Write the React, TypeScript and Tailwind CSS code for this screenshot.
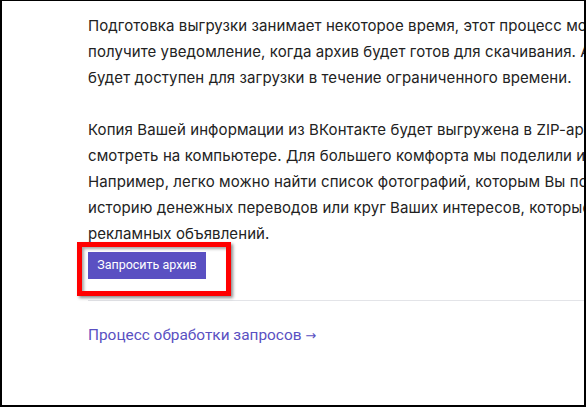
export default function App() {
  return (
    <div className="relative w-[586px] h-[407px] overflow-hidden bg-white border-l-2 border-r-2 border-b-2 border-t border-black">
      <div className="pl-[86px] pt-[12px] w-[900px]" style={{ fontFamily: "Inter, 'Noto Sans', sans-serif" }}>
        <p className="text-[15px] leading-[26px] tracking-[0.09px] text-[#222222] whitespace-nowrap">
          Подготовка выгрузки занимает некоторое время, этот процесс может занять до нескольких дней. Вы
          <br />
          получите уведомление, когда архив будет готов для скачивания. Архив
          <br />
          будет доступен для загрузки в течение ограниченного времени.
        </p>
        <p className="mt-[26px] text-[15px] leading-[26px] tracking-[0.09px] text-[#222222] whitespace-nowrap">
          Копия Вашей информации из ВКонтакте будет выгружена в ZIP-архив, который Вы сможете
          <br />
          смотреть на компьютере. Для большего комфорта мы поделили информацию на разделы.
          <br />
          Например, легко можно найти список фотографий, которым Вы поставили «Мне нравится»,
          <br />
          историю денежных переводов или круг Ваших интересов, которые используются для показа
          <br />
          рекламных объявлений.
        </p>
        <div className="mt-[5px] flex">
          <button
            className="w-[118px] h-[27px] bg-[#5a50c2] text-white text-[12.5px] font-normal flex items-center justify-center"
            style={{ fontFamily: "Roboto, 'Liberation Sans', sans-serif" }}
          >
            Запросить архив
          </button>
        </div>
        <div className="mt-[21px] h-px bg-[#e3e4e8] w-[600px]" />
        <div
          className="mt-[24px] text-[15.4px] leading-[20px] text-[#5a50c2]"
          style={{ fontFamily: "Roboto, 'Liberation Sans', sans-serif" }}
        >
          Процесс обработки запросов <span style={{ fontFamily: "'DejaVu Sans', sans-serif" }} className="text-[13px]">→</span>
        </div>
      </div>
      <div className="absolute left-[75px] top-[241px] w-[154px] h-[54px] border-[5px] border-[#ff0000] shadow-[2px_2px_3px_rgba(0,0,0,0.45),inset_2px_2px_3px_rgba(0,0,0,0.35)]" />
    </div>
  );
}
